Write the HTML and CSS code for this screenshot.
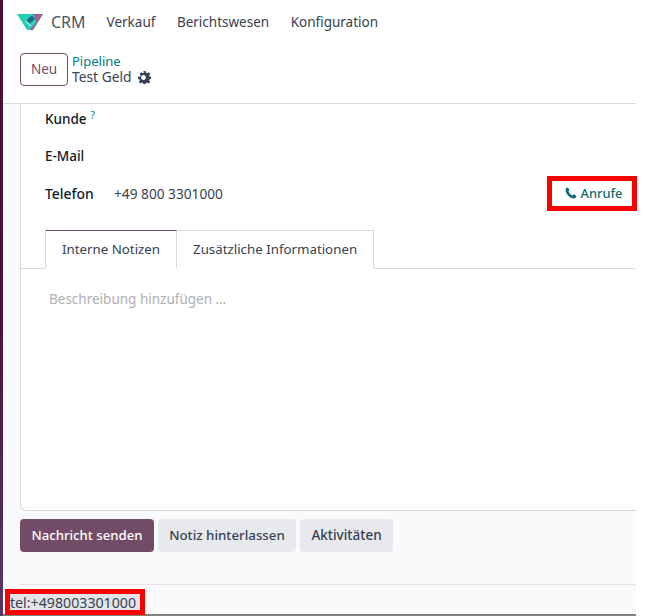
FILE: index.html
```html
<!DOCTYPE html>
<html lang="de">
<head>
<meta charset="utf-8">
<title>CRM</title>
<link rel="stylesheet" href="styles.css">
</head>
<body>
<div class="strip"></div>
<div class="app">
  <nav class="navbar">
    <svg class="logo" width="26" height="16" viewBox="0 0 26 16">
      <path d="M0 0H26L16 16H10Z" fill="#25d0b5"/>
      <path d="M16.500 0H26L16 16H12L17 11L19 8Z" fill="#a0628f"/>
      <path d="M9.500 6.500L14.500 1.500L18 4.500L13 9.500Z" fill="#1c6a85"/>
      <path d="M8.500 7L14 12" stroke="#fff" stroke-width="1" fill="none"/>
    </svg>
    <span class="brand">CRM</span>
    <span class="menu">Verkauf</span>
    <span class="menu">Berichtswesen</span>
    <span class="menu">Konfiguration</span>
  </nav>
  <div class="control">
    <button class="new">Neu</button>
    <div class="crumbs">
      <span class="crumb-link">Pipeline</span>
      <span class="crumb-cur">Test Geld
        <svg class="gear" width="13" height="13" viewBox="0 0 16 16"><path fill="#374151" fill-rule="evenodd" d="M6.600 0h2.800l.4 2.200 1.300.6L13 1.500l2 2-1.300 1.900.5 1.300 2.300.4v2.800l-2.300.4-.5 1.300 1.300 1.900-2 2-1.900-1.300-1.300.5-.4 2.300H6.600l-.4-2.300-1.300-.5L3 15.500l-2-2 1.300-1.900-.5-1.300L0 9.900V7.100l2.800-.4.5-1.300L2 3.500l2-2 1.900 1.300 1.300-.6zM8 5.300a3 3 0 1 0 0 5.400 3 3 0 0 0 0-5.400z"/></svg>
      </span>
    </div>
  </div>
  <main class="content">
    <section class="sheet">
      <div class="field field-kunde"><span class="label">Kunde</span><sup class="help">?</sup></div>
      <div class="field field-mail"><span class="label">E-Mail</span></div>
      <div class="field field-tel">
        <span class="label label-tel">Telefon</span>
        <span class="value">+49 800 3301000</span>
        <span class="call">
          <svg width="12" height="12" viewBox="0 0 12 12"><path fill="#0e6b70" d="M2.800.6 4.500 3 3.400 4.300c.6 1.700 2.300 3.400 4.200 4.200L8.900 7.300l2.500 1.800c-.3 1.500-1.100 2.400-2.200 2.400C4.600 11.300.7 7.300.6 2.800.6 1.800 1.400 1 2.800.6z"/></svg>
          Anrufe
        </span>
      </div>
      <div class="tabs">
        <span class="tab tab-active">Interne Notizen</span>
        <span class="tab">Zusätzliche Informationen</span>
      </div>
      <div class="notes">Beschreibung hinzufügen …</div>
    </section>
    <div class="chatter">
      <button class="btn btn-primary">Nachricht senden</button>
      <button class="btn btn-notiz">Notiz hinterlassen</button>
      <button class="btn btn-akt">Aktivitäten</button>
    </div>
    <div class="rule"></div>
  </main>
  <div class="baseline"></div>
</div>
<div class="status"><span class="status-text">tel:+498003301000</span></div>
</body>
</html>
```
FILE: styles.css
```css
* { box-sizing: border-box; }
html, body { margin: 0; height: 100%; }
body {
  display: flex;
  width: 647px;
  height: 616px;
  overflow: hidden;
  background: #fff;
  font-family: "Noto Sans", sans-serif;
  font-size: 13.5px;
  color: #374151;
  position: relative;
}
.strip { width: 3px; background: linear-gradient(#4a0d3a, #4a1238 50%, #5c3668); flex: none; }
.app { width: 633px; flex: none; display: flex; flex-direction: column; }
.navbar { height: 43px; display: flex; align-items: center; padding-left: 14px; flex: none; }
.logo { margin-right: 8px; margin-top: 1px; }
.brand { font-size: 16px; margin-right: 21px; color: #4b5563; }
.menu { margin-right: 21.500px; font-size: 13.5px; }
.control { height: 61px; flex: none; display: flex; align-items: flex-start; padding: 10px 0 0 17px; border-bottom: 1px solid #d8dadd; }
.new { width: 48px; height: 33px; border: 1px solid #714b67; border-radius: 4px; background: #fff; color: #714b67; font: inherit; padding: 0 0 2px; }
.crumbs { display: flex; flex-direction: column; margin-left: 4px; line-height: 16px; }
.crumb-link { color: #017e84; font-size: 13px; }
.crumb-cur { font-size: 13.8px; }
.gear { margin-left: 3px; vertical-align: -2px; }
.content { flex: 1; background: #f9fafb; padding: 0 0 0 17px; display: flex; flex-direction: column; }
.sheet { height: 407px; background: #fff; border: 1px solid #d8dadd; border-top: 0; border-right: 0; border-radius: 0 0 0 6px; flex: none; }
.field { display: flex; align-items: center; padding-left: 24px; height: 22px; }
.field-kunde { margin-top: 4px; }
.field-mail { margin-top: 15px; }
.field-tel { margin-top: 15px; }
.label { font-weight: 500; color: #111827; width: 69px; }
.label-tel { font-size: 13.9px; }
.field-kunde .label { width: auto; }
.help { font-size: 10px; color: #017e84; margin-left: 4px; align-self: flex-start; margin-top: 0; }
.value { color: #374151; margin-top: 1px; font-size: 13.7px; }
.call { margin-left: auto; margin-right: -1px; display: flex; align-items: center; gap: 4px; border: 5px solid #f00; height: 35px; width: 90px; justify-content: center; color: #0e6b70; font-size: 12.8px; font-weight: 500; flex: none; padding-left: 3px; }
.tabs { display: flex; margin-top: 26px; padding-left: 24px; height: 39px; border-bottom: 1px solid #d8dadd; }
.tab { padding: 0 16px; height: 39px; line-height: 37px; border: 1px solid #d8dadd; border-left: 0; border-bottom: 0; background: #fff; font-size: 13.3px; }
.tab-active { border-left: 1px solid #d8dadd; border-top: 1px solid #714b67; border-bottom: 1px solid #fff; }
.notes { padding: 21px 0 0 28px; color: #adb0b4; }
.chatter { display: flex; gap: 4px; margin-top: 8px; flex: none; }
.btn { height: 33px; border: 0; border-radius: 4px; background: #e7e9ed; color: #374151; font: inherit; font-weight: 500; padding: 0 12px 1px; }
.btn-primary { background: #714b67; color: #fff; width: 134px; font-size: 13.2px; padding: 0 0 1px; }
.btn-notiz { width: 138px; font-size: 13.3px; padding: 0 0 1px; }
.btn-akt { width: 93px; font-size: 13.5px; padding: 0 0 1px; }
.rule { height: 1px; background: #e3e5e8; margin-top: 32px; flex: none; }
.baseline { height: 2px; background: #808080; flex: none; }
.status { position: absolute; left: 5px; top: 589px; height: 26px; width: 140px; border: 5px solid #f00; background: #e3e5e8; display: flex; align-items: center; }
.status-text { font-size: 14.2px; color: #374151; white-space: nowrap; line-height: 16px; padding-top: 1px; }
```
